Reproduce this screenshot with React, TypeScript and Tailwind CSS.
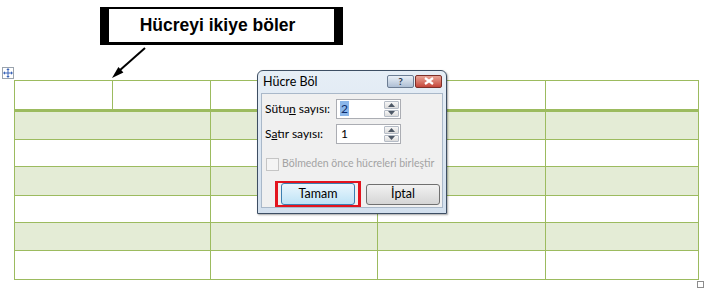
import React from 'react';

const line = 'border-[#9cbb5f]';

const HeaderRow = () => (
  <div className={`flex h-[31px] border-b-[3px] ${line}`}>
    {[98, 98, 167, 168, 153].map((w, i) => (
      <div key={i} className={`h-full border-r ${line}`} style={{ width: w }} />
    ))}
  </div>
);

const DataRow = ({ h, shaded }: { h: number; shaded: boolean }) => (
  <div className={`flex border-b ${line} ${shaded ? 'bg-[#e4ecd6]' : 'bg-white'}`} style={{ height: h }}>
    {[196, 167, 168, 153].map((w, i) => (
      <div key={i} className={`h-full border-r ${line}`} style={{ width: w }} />
    ))}
  </div>
);

const Spinner = () => (
  <div className="flex flex-col w-[15px] h-[16px] gap-[1px] shrink-0">
    {[0, 1].map(i => (
      <div key={i} className="flex-1 flex items-center justify-center border border-[#b5bcc6] rounded-[1px] bg-gradient-to-b from-[#f7f7f7] to-[#dcdcdc]">
        <svg width="7" height="4" viewBox="0 0 7 4">
          {i === 0 ? <path d="M0 4 L3.5 0 L7 4 Z" fill="#4d5866" /> : <path d="M0 0 L3.5 4 L7 0 Z" fill="#4d5866" />}
        </svg>
      </div>
    ))}
  </div>
);

const NumberField = ({ value, selected }: { value: string; selected?: boolean }) => (
  <div className="flex items-center w-[65px] h-[20px] border border-[#abadb3] bg-white pl-[3px] pr-[1px]">
    <div className="flex-1 text-[12px] leading-none text-black">
      <span className={selected ? 'bg-[#8ab6ea] text-[#0b2a6b] px-[1px]' : 'px-[1px]'}>{value}</span>
    </div>
    <Spinner />
  </div>
);

const Dialog = () => (
  <div
    className="absolute left-[257px] top-[70px] w-[190px] h-[144px] rounded-t-[6px] border border-[#3d4e63] bg-gradient-to-b from-[#e6eef6] to-[#d3e0ee] shadow-[1px_1px_2px_rgba(0,0,0,0.35)] flex flex-col"
    style={{ fontFamily: 'Lato, "Noto Sans", sans-serif' }}
  >
    <div className="flex items-center h-[23px] pl-[5px] pr-[4px]">
      <span className="flex-1 text-[12.5px] text-black">Hücre Böl</span>
      <div className="flex gap-[1px] mt-[-2px]">
        <div className="w-[27px] h-[13px] rounded-[2px] border border-[#6c7d93] bg-gradient-to-b from-[#e9eff6] to-[#aebfd4] flex items-center justify-center text-[10px] font-bold leading-none text-[#2c3a4c]">?</div>
        <div className="w-[27px] h-[13px] rounded-[2px] border border-[#7d2f28] bg-gradient-to-b from-[#e8a497] to-[#c4453a] flex items-center justify-center">
          <svg width="10" height="8" viewBox="0 0 10 8">
            <path d="M1 1 L9 7 M9 1 L1 7" stroke="#fff" strokeWidth="2.2" />
          </svg>
        </div>
      </div>
    </div>
    <div className="flex-1 mx-[3px] mb-[5px] bg-[#f0f0f0] border border-[#a9b8c9] flex flex-col pl-[3px] pt-[5px] text-[12px] text-black whitespace-nowrap">
      <div className="flex items-center h-[20px]">
        <span className="w-[71px]">Sütu<span className="underline">n</span> sayısı:</span>
        <NumberField value="2" selected />
      </div>
      <div className="flex items-center h-[20px] mt-[5px]">
        <span className="w-[71px]">S<span className="underline">a</span>tır sayısı:</span>
        <NumberField value="1" />
      </div>
      <div className="flex items-center h-[14px] mt-[13px] pl-[1px] gap-[3px] text-[#a3a3a3]">
        <div className="w-[13px] h-[13px] shrink-0 border border-[#c5c5c5] bg-[#f4f4f4]" />
        <span className="text-[10.5px]">Bölmeden önce hücreleri birleştir</span>
      </div>
      <div className="flex items-center mt-[10px] ml-[10px] gap-[5px]">
        <div className="border-x-[3px] border-y-[2px] border-[#e3141e] px-[3px]">
          <div className="w-[74px] h-[22px] rounded-[3px] border border-[#3c7fb1] bg-gradient-to-b from-[#eaf6fd] to-[#bee3f6] flex items-center justify-center text-[12.5px]">Tamam</div>
        </div>
        <div className="w-[74px] h-[21px] rounded-[3px] border border-[#707070] bg-gradient-to-b from-[#f2f2f2] to-[#d5d5d5] flex items-center justify-center text-[12.5px]">İptal</div>
      </div>
    </div>
  </div>
);

export default function App() {
  return (
    <div className="relative w-[704px] h-[295px] overflow-hidden bg-white">
      <div className="ml-[100px] mt-[7px] w-[243px] h-[38px] border-t-2 border-b-[3px] border-l-[9px] border-r-[9px] border-black bg-white flex items-center justify-center">
        <span className="text-[17.5px] font-bold text-black ml-[-8px]" style={{ fontFamily: '"Liberation Sans", Arial, sans-serif' }}>
          Hücreyi ikiye böler
        </span>
      </div>

      <div className="ml-[2px] mt-[22px] w-[12px] h-[12px] border border-[#9aa3ad] bg-white flex items-center justify-center">
        <svg width="10" height="10" viewBox="0 0 10 10">
          <path d="M5 1 V9 M1 5 H9" stroke="#3a64b8" strokeWidth="1" />
          <path d="M5 0 L3.3 2 H6.7 Z M5 10 L3.3 8 H6.7 Z M0 5 L2 3.3 V6.7 Z M10 5 L8 3.3 V6.7 Z" fill="#3a64b8" />
        </svg>
      </div>

      <div className={`ml-[14px] mt-[1px] w-[685px] border-l border-t ${line}`}>
        <HeaderRow />
        <DataRow h={28} shaded />
        <DataRow h={27} shaded={false} />
        <DataRow h={29} shaded />
        <DataRow h={27} shaded={false} />
        <DataRow h={28} shaded />
        <DataRow h={29} shaded={false} />
      </div>

      <div className="ml-[697px] mt-[1px] w-[7px] h-[7px] border border-[#8c8c8c] bg-white" />

      <svg className="absolute left-0 top-0" width="704" height="295">
        <path d="M145 48 L119 71" stroke="#000" strokeWidth="2" />
        <path d="M112 78 L118.4 67 L123.4 72.6 Z" fill="#000" />
      </svg>

      <Dialog />
    </div>
  );
}
